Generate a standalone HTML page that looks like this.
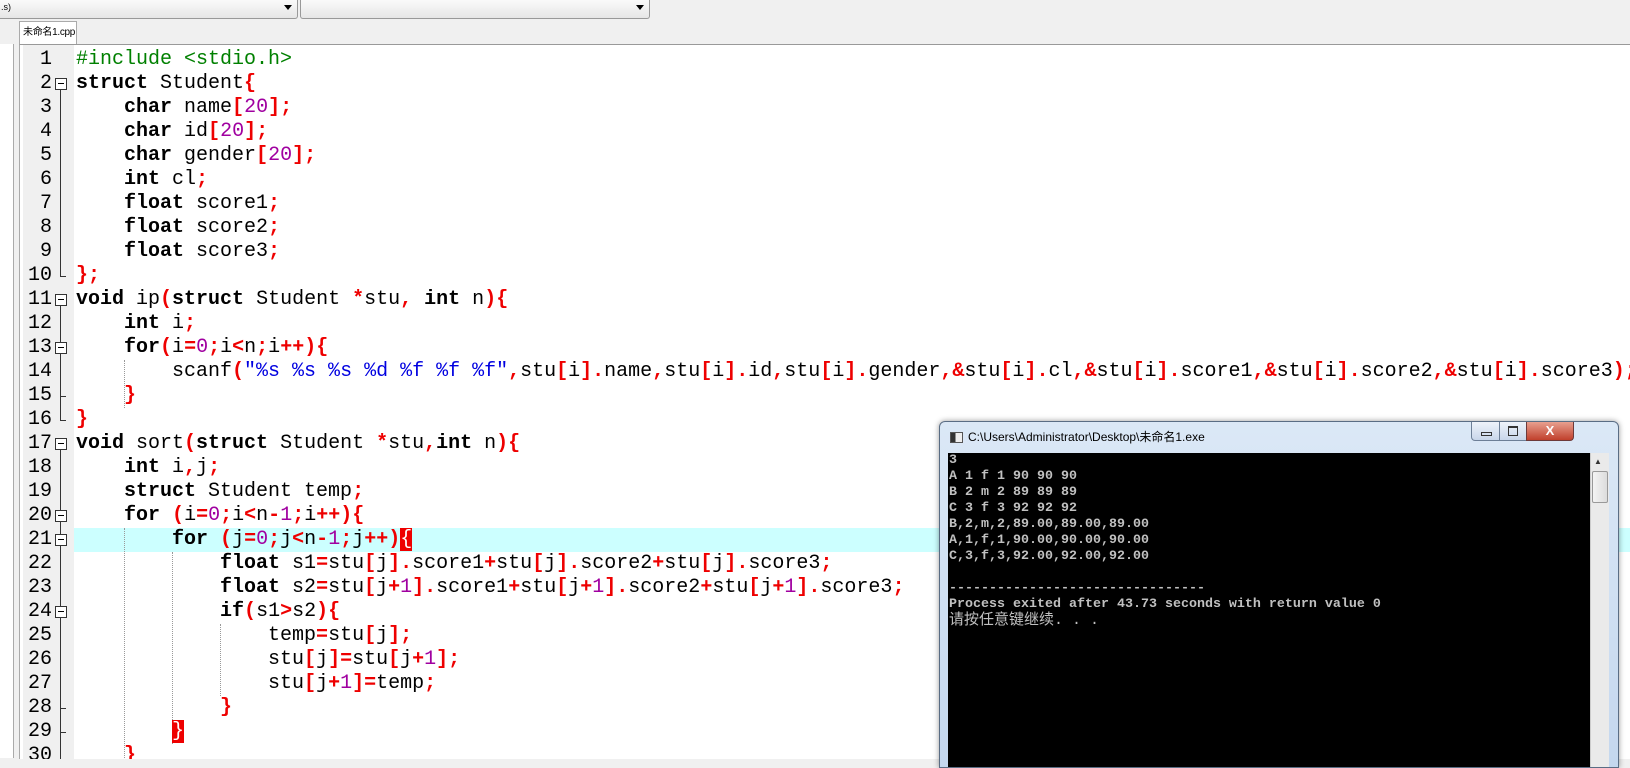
<!DOCTYPE html>
<html><head><meta charset="utf-8"><style>
body{margin:0;width:1630px;height:758px;overflow:hidden;background:#f0f0f0;position:relative;font-family:"Liberation Sans","Noto Sans CJK SC",sans-serif}
.cb{position:absolute;top:0;height:18px;border:1px solid #999;border-top:none;background:linear-gradient(#fafafa,#e6e6e6);border-radius:0 0 3px 3px}
.cb .ar{position:absolute;right:5px;top:5px;width:0;height:0;border-left:4px solid transparent;border-right:4px solid transparent;border-top:5px solid #000}
.left{position:absolute;left:0;top:44px;width:13px;height:714px;background:#fff;border-right:1px solid #aaa}
.tab{position:absolute;left:19px;top:21px;width:58px;height:23px;background:#fff;border:1px solid #aaa;border-bottom:none;font-size:10px;letter-spacing:-0.3px;line-height:22px;padding-left:3px;box-sizing:border-box;white-space:nowrap;overflow:hidden}
.ed{position:absolute;left:19px;top:44px;width:1611px;height:714px;background:#fff;border-top:1px solid #999;border-left:1px solid #aaa;overflow:hidden}
.gut{position:absolute;left:3px;top:0;width:51px;height:714px;background:#f0f0f0}
.ln{position:absolute;left:0;width:32px;text-align:right;font:20px/24px "Liberation Mono",monospace;color:#000}
.c{position:absolute;left:56px;white-space:pre;font:20px/24px "Liberation Mono",monospace;color:#000;height:24px}
.k{font-weight:bold}.o{color:#e00;font-weight:bold}.n{color:#a000a0}.s{color:#0000e0}.p{color:#008000}
.hl{position:absolute;left:54px;width:1560px;height:24px;background:#ccffff}
.fb{position:absolute;left:35px;width:10px;height:10px;border:1px solid #333;background:#fff}
.fb:after{content:"";position:absolute;left:2px;top:4px;width:6px;height:1px;background:#000}
.vl{position:absolute;left:40px;width:1px;background:#333}
.tk{position:absolute;left:40px;width:6px;height:1px;background:#333}
.ig{position:absolute;width:0;border-left:1px dotted #999}
.mb{background:#e00;color:#fff}
.win{position:absolute;left:939px;top:421px;width:678px;height:345px;background:linear-gradient(#dbe8f6,#c4d7ee);border:1px solid #5a6d84;border-radius:6px 6px 0 0;box-shadow:0 0 6px rgba(0,0,0,.4);overflow:hidden}
.con{position:absolute;left:8px;top:31px;width:642px;height:320px;background:#000;font:bold 13.33px/16px "Liberation Mono","Noto Sans CJK SC",monospace;color:#c0c0c0;white-space:pre;padding:0 0 0 1px}
.sb{position:absolute;left:650px;top:31px;width:18px;height:320px;background:#eaeaea;border-left:1px solid #ccc}
</style></head><body>
<div class="cb" style="left:-4px;width:300px"><span style="position:absolute;left:4px;top:2px;font-size:9px">.s)</span><div class="ar"></div></div>
<div class="cb" style="left:300px;width:348px"><div class="ar"></div></div>
<div class="left"></div>
<div class="tab">未命名1.cpp</div>
<div class="ed">
<div class="gut"></div>
<div class="hl" style="top:483px"></div>
<div class="ln" style="top:3px">1</div><div class="ln" style="top:27px">2</div><div class="ln" style="top:51px">3</div><div class="ln" style="top:75px">4</div><div class="ln" style="top:99px">5</div><div class="ln" style="top:123px">6</div><div class="ln" style="top:147px">7</div><div class="ln" style="top:171px">8</div><div class="ln" style="top:195px">9</div><div class="ln" style="top:219px">10</div><div class="ln" style="top:243px">11</div><div class="ln" style="top:267px">12</div><div class="ln" style="top:291px">13</div><div class="ln" style="top:315px">14</div><div class="ln" style="top:339px">15</div><div class="ln" style="top:363px">16</div><div class="ln" style="top:387px">17</div><div class="ln" style="top:411px">18</div><div class="ln" style="top:435px">19</div><div class="ln" style="top:459px">20</div><div class="ln" style="top:483px">21</div><div class="ln" style="top:507px">22</div><div class="ln" style="top:531px">23</div><div class="ln" style="top:555px">24</div><div class="ln" style="top:579px">25</div><div class="ln" style="top:603px">26</div><div class="ln" style="top:627px">27</div><div class="ln" style="top:651px">28</div><div class="ln" style="top:675px">29</div><div class="ln" style="top:699px">30</div>
<div class="vl" style="top:45px;height:186px"></div><div class="tk" style="top:231px"></div>
<div class="vl" style="top:261px;height:114px"></div><div class="tk" style="top:375px"></div><div class="tk" style="top:351px"></div>
<div class="vl" style="top:405px;height:320px"></div><div class="tk" style="top:663px"></div><div class="tk" style="top:687px"></div>
<div class="fb" style="top:33px"></div><div class="fb" style="top:249px"></div><div class="fb" style="top:297px"></div><div class="fb" style="top:393px"></div><div class="fb" style="top:465px"></div><div class="fb" style="top:489px"></div><div class="fb" style="top:561px"></div>
<div class="ig" style="left:104px;top:315px;height:48px"></div>
<div class="ig" style="left:104px;top:483px;height:230px"></div>
<div class="ig" style="left:152px;top:507px;height:192px"></div>
<div class="ig" style="left:200px;top:579px;height:72px"></div>
<div class="c" style="top:3px"><span class="p">#include &lt;stdio.h&gt;</span></div>
<div class="c" style="top:27px"><span class="k">struct</span> Student<span class="o">{</span></div>
<div class="c" style="top:51px">    <span class="k">char</span> name<span class="o">[</span><span class="n">20</span><span class="o">];</span></div>
<div class="c" style="top:75px">    <span class="k">char</span> id<span class="o">[</span><span class="n">20</span><span class="o">];</span></div>
<div class="c" style="top:99px">    <span class="k">char</span> gender<span class="o">[</span><span class="n">20</span><span class="o">];</span></div>
<div class="c" style="top:123px">    <span class="k">int</span> cl<span class="o">;</span></div>
<div class="c" style="top:147px">    <span class="k">float</span> score1<span class="o">;</span></div>
<div class="c" style="top:171px">    <span class="k">float</span> score2<span class="o">;</span></div>
<div class="c" style="top:195px">    <span class="k">float</span> score3<span class="o">;</span></div>
<div class="c" style="top:219px"><span class="o">};</span></div>
<div class="c" style="top:243px"><span class="k">void</span> ip<span class="o">(</span><span class="k">struct</span> Student <span class="o">*</span>stu<span class="o">,</span> <span class="k">int</span> n<span class="o">){</span></div>
<div class="c" style="top:267px">    <span class="k">int</span> i<span class="o">;</span></div>
<div class="c" style="top:291px">    <span class="k">for</span><span class="o">(</span>i<span class="o">=</span><span class="n">0</span><span class="o">;</span>i<span class="o">&lt;</span>n<span class="o">;</span>i<span class="o">++){</span></div>
<div class="c" style="top:315px">        scanf<span class="o">(</span><span class="s">"%s %s %s %d %f %f %f"</span><span class="o">,</span>stu<span class="o">[</span>i<span class="o">].</span>name<span class="o">,</span>stu<span class="o">[</span>i<span class="o">].</span>id<span class="o">,</span>stu<span class="o">[</span>i<span class="o">].</span>gender<span class="o">,&amp;</span>stu<span class="o">[</span>i<span class="o">].</span>cl<span class="o">,&amp;</span>stu<span class="o">[</span>i<span class="o">].</span>score1<span class="o">,&amp;</span>stu<span class="o">[</span>i<span class="o">].</span>score2<span class="o">,&amp;</span>stu<span class="o">[</span>i<span class="o">].</span>score3<span class="o">);</span></div>
<div class="c" style="top:339px">    <span class="o">}</span></div>
<div class="c" style="top:363px"><span class="o">}</span></div>
<div class="c" style="top:387px"><span class="k">void</span> sort<span class="o">(</span><span class="k">struct</span> Student <span class="o">*</span>stu<span class="o">,</span><span class="k">int</span> n<span class="o">){</span></div>
<div class="c" style="top:411px">    <span class="k">int</span> i<span class="o">,</span>j<span class="o">;</span></div>
<div class="c" style="top:435px">    <span class="k">struct</span> Student temp<span class="o">;</span></div>
<div class="c" style="top:459px">    <span class="k">for</span> <span class="o">(</span>i<span class="o">=</span><span class="n">0</span><span class="o">;</span>i<span class="o">&lt;</span>n<span class="o">-</span><span class="n">1</span><span class="o">;</span>i<span class="o">++){</span></div>
<div class="c" style="top:483px">        <span class="k">for</span> <span class="o">(</span>j<span class="o">=</span><span class="n">0</span><span class="o">;</span>j<span class="o">&lt;</span>n<span class="o">-</span><span class="n">1</span><span class="o">;</span>j<span class="o">++)</span><span class="mb">{</span></div>
<div class="c" style="top:507px">            <span class="k">float</span> s1<span class="o">=</span>stu<span class="o">[</span>j<span class="o">].</span>score1<span class="o">+</span>stu<span class="o">[</span>j<span class="o">].</span>score2<span class="o">+</span>stu<span class="o">[</span>j<span class="o">].</span>score3<span class="o">;</span></div>
<div class="c" style="top:531px">            <span class="k">float</span> s2<span class="o">=</span>stu<span class="o">[</span>j<span class="o">+</span><span class="n">1</span><span class="o">].</span>score1<span class="o">+</span>stu<span class="o">[</span>j<span class="o">+</span><span class="n">1</span><span class="o">].</span>score2<span class="o">+</span>stu<span class="o">[</span>j<span class="o">+</span><span class="n">1</span><span class="o">].</span>score3<span class="o">;</span></div>
<div class="c" style="top:555px">            <span class="k">if</span><span class="o">(</span>s1<span class="o">&gt;</span>s2<span class="o">){</span></div>
<div class="c" style="top:579px">                temp<span class="o">=</span>stu<span class="o">[</span>j<span class="o">];</span></div>
<div class="c" style="top:603px">                stu<span class="o">[</span>j<span class="o">]=</span>stu<span class="o">[</span>j<span class="o">+</span><span class="n">1</span><span class="o">];</span></div>
<div class="c" style="top:627px">                stu<span class="o">[</span>j<span class="o">+</span><span class="n">1</span><span class="o">]=</span>temp<span class="o">;</span></div>
<div class="c" style="top:651px">            <span class="o">}</span></div>
<div class="c" style="top:675px">        <span class="mb">}</span></div>
<div class="c" style="top:699px">    <span class="o">}</span></div>
</div>
<div class="win">
<div style="position:absolute;left:10px;top:10px;width:11px;height:9px;border:1px solid #555;background:linear-gradient(90deg,#333 40%,#eee 40%)"></div>
<div style="position:absolute;left:28px;top:6px;font-size:12px;color:#000">C:\Users\Administrator\Desktop\未命名1.exe</div>
<div style="position:absolute;left:531px;top:0;width:27px;height:18px;border:1px solid #6d7f97;border-top:none;background:linear-gradient(#eef3fa,#c8d6ea);border-radius:0 0 0 4px"><div style="position:absolute;left:9px;top:10px;width:9px;height:2px;border:1px solid #333"></div></div>
<div style="position:absolute;left:559px;top:0;width:26px;height:18px;border:1px solid #6d7f97;border-top:none;background:linear-gradient(#eef3fa,#c8d6ea)"><div style="position:absolute;left:8px;top:4px;width:8px;height:7px;border:1px solid #333;border-top-width:2px"></div></div>
<div style="position:absolute;left:586px;top:0;width:46px;height:18px;border:1px solid #6d3a3a;border-top:none;background:linear-gradient(#e8a08f,#c0402c);border-radius:0 0 4px 0;color:#fff;font:bold 13px/18px 'Liberation Sans';text-align:center">X</div>
<div class="con">3
A 1 f 1 90 90 90
B 2 m 2 89 89 89
C 3 f 3 92 92 92
B,2,m,2,89.00,89.00,89.00
A,1,f,1,90.00,90.00,90.00
C,3,f,3,92.00,92.00,92.00

--------------------------------
Process exited after 43.73 seconds with return value 0
<span style="font-weight:normal;font-size:15px">请按任意键继续. . .</span></div>
<div class="sb"><div style="position:absolute;left:3px;top:4px;font-size:8px;color:#333">▲</div><div style="position:absolute;left:1px;top:18px;width:14px;height:30px;border:1px solid #999;border-radius:2px;background:linear-gradient(90deg,#f4f4f4,#dcdcdc)"></div></div>
</div>
</body></html>
